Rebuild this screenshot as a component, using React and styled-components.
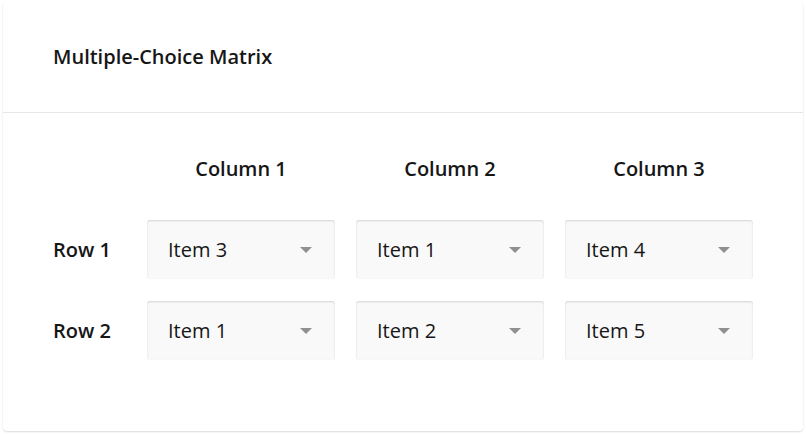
import styled, { createGlobalStyle } from 'styled-components';

const GlobalStyle = createGlobalStyle`
    body {
        margin: 0;
        background: #ffffff;
        font-family: "Open Sans", "Noto Sans", sans-serif;
        color: #161616;
    }
`;

export const Card = styled.section`
    box-sizing: border-box;
    width: 800px;
    margin: 2px 3px;
    background: #ffffff;
    border-radius: 4px;
    box-shadow: 0 1px 2px rgba(0, 0, 0, 0.15);
`;

export const CardHeader = styled.header`
    display: flex;
    align-items: center;
    height: 110px;
    padding: 0 50px;
    border-bottom: 1px solid #e6e6e6;
`;

export const CardTitle = styled.h1`
    margin: 0;
    font-size: 20px;
    font-weight: 600;
    line-height: 28px;
`;

export const Matrix = styled.div`
    display: grid;
    grid-template-columns: 73px repeat(3, 188px);
    grid-auto-rows: 59px;
    grid-template-rows: 58px;
    column-gap: 21px;
    row-gap: 22px;
    padding: 27px 50px 71px;
`;

export const ColumnTitle = styled.div`
    display: flex;
    align-items: center;
    justify-content: center;
    padding-bottom: 2px;
    font-size: 20px;
    font-weight: 600;
`;

export const RowTitle = styled.div`
    display: flex;
    align-items: center;
    font-size: 20px;
    font-weight: 600;
`;

export const Dropdown = styled.div`
    display: flex;
    align-items: center;
    justify-content: space-between;
    padding: 0 23px 0 21px;
    background: #f9f9f9;
    border-radius: 3px;
    box-shadow: inset 0 1px 2px rgba(0, 0, 0, 0.15);
    font-size: 20px;
    cursor: pointer;
`;

const Arrow = () => (
    <svg width="12" height="6" viewBox="0 0 12 6">
        <path d="M0 0H12L6 6Z" fill="#909090" />
    </svg>
);

const columns = ['Column 1', 'Column 2', 'Column 3'];

const rows = [
    { name: 'Row 1', values: ['Item 3', 'Item 1', 'Item 4'] },
    { name: 'Row 2', values: ['Item 1', 'Item 2', 'Item 5'] }
];

const App = () => (
    <>
        <GlobalStyle />
        <Card>
            <CardHeader>
                <CardTitle>Multiple-Choice Matrix</CardTitle>
            </CardHeader>
            <Matrix>
                <div />
                {columns.map((column) => (
                    <ColumnTitle key={column}>{column}</ColumnTitle>
                ))}
                {rows.map((row) => [
                    <RowTitle key={row.name}>{row.name}</RowTitle>,
                    ...row.values.map((value, i) => (
                        <Dropdown key={row.name + i}>
                            {value}
                            <Arrow />
                        </Dropdown>
                    ))
                ])}
            </Matrix>
        </Card>
    </>
);

export default App;
